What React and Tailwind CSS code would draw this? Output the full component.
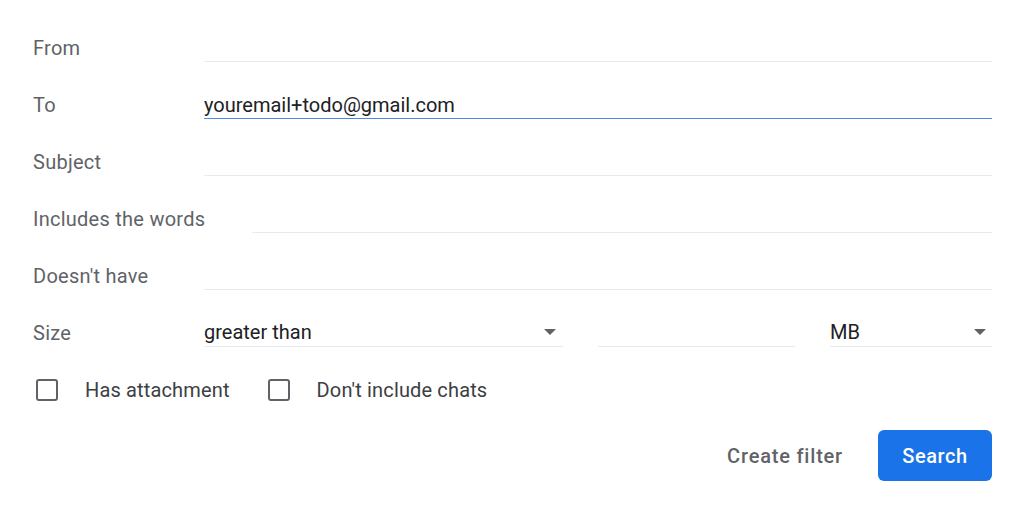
import React from "react";

const rows = [
  { label: "From", value: "" },
  { label: "To", value: "youremail+todo@gmail.com", focused: true },
  { label: "Subject", value: "" },
  { label: "Includes the words", value: "" },
  { label: "Doesn't have", value: "" },
];

// small filled caret used by the two selects
const Caret = () => (
  <svg width="12" height="6" viewBox="0 0 12 6" className="shrink-0">
    <path d="M0 0h12L6 6z" fill="#5f6368" />
  </svg>
);

const Checkbox = ({ label }) => (
  <label className="flex items-center cursor-pointer">
    <span className="w-[22px] h-[22px] rounded-[3px] border-[2.5px] border-[#5f6368] box-border" />
    <span className="ml-[27px] text-[#3c4043] tracking-[0.15px]">{label}</span>
  </label>
);

export default function App() {
  return (
    <div
      className="w-[1024px] h-[511px] bg-white pt-[19px] pl-[33px] pr-[32px] text-[20px] overflow-hidden"
      style={{ fontFamily: "Roboto, 'Noto Sans', Arial, sans-serif" }}
    >
      {rows.map((row) => (
        <div key={row.label} className="flex items-center h-[57px]">
          <div className="min-w-[171px] pr-[47px] text-[#5f6368] whitespace-nowrap tracking-[0.25px]">
            {row.label}
          </div>
          <div
            className={`flex-1 h-[28px] leading-[28px] text-[#202124] border-b ${
              row.focused ? "border-[#4f87e6]" : "border-[#e8eaed]"
            }`}
          >
            {row.value}
          </div>
        </div>
      ))}

      {/* Size */}
      <div className="flex items-center h-[57px]">
        <div className="min-w-[171px] pr-[47px] text-[#5f6368] tracking-[0.25px]">Size</div>
        <div className="flex-1 flex items-center">
          <div className="w-[359px] h-[28px] border-b border-[#e8eaed] flex items-center justify-between pr-[7px] text-[#202124]">
            <span className="leading-[28px]">greater than</span>
            <Caret />
          </div>
          <div className="w-[197px] ml-[35px] h-[28px] border-b border-[#e8eaed]" />
          <div className="flex-1 ml-[35px] h-[28px] border-b border-[#e8eaed] flex items-center justify-between pr-[6px] text-[#202124]">
            <span className="leading-[28px]">MB</span>
            <Caret />
          </div>
        </div>
      </div>

      {/* Checkboxes */}
      <div className="flex items-center h-[57px] pl-[3px] gap-[38px]">
        <Checkbox label="Has attachment" />
        <Checkbox label="Don't include chats" />
      </div>

      {/* Actions */}
      <div className="flex justify-end items-center mt-[12px]">
        <button className="text-[20px] font-medium text-[#5f6368] mr-[35px] tracking-[0.8px]">
          Create filter
        </button>
        <button className="w-[114px] h-[51px] rounded-[6px] bg-[#1a73e8] text-white text-[20px] font-medium tracking-[0.6px]">
          Search
        </button>
      </div>
    </div>
  );
}
